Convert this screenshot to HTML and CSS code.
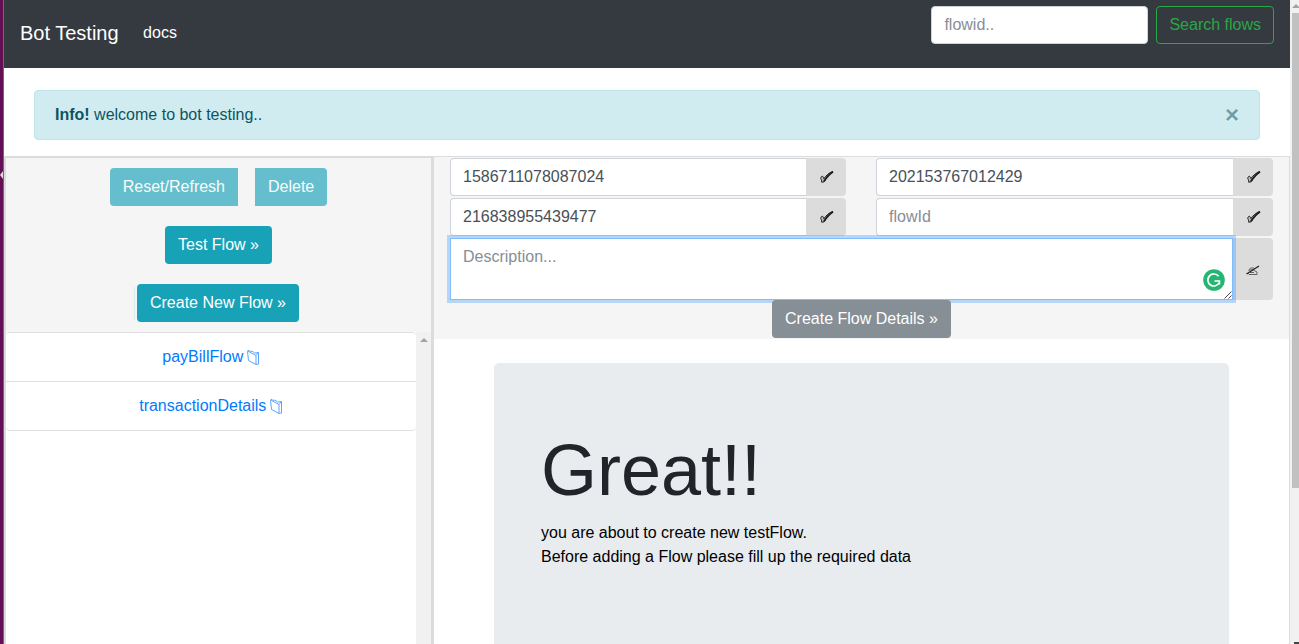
FILE: index.html
```html
<!DOCTYPE html>
<html lang="en">
<head>
<meta charset="utf-8">
<title>Bot Testing</title>
<link rel="stylesheet" href="styles.css">
</head>
<body>
<svg class="defs" aria-hidden="true">
  <symbol id="check" viewBox="0 0 16 14"><path d="M2.600 6.500C3.800 5.800 4.600 6.800 4.800 8.700 7 5.500 10 2.700 14 1.300 10.500 4 7.500 7.500 5 11.900L2.700 12.200C2.600 10.300 2.400 9 1.600 8.300Z" fill="#b9bcc0" stroke="#222" stroke-width="1"/><path d="M5 11.300C7.400 7.500 10.600 3.800 14 1.700" fill="none" stroke="#1c1c1c" stroke-width="1.900"/></symbol>
  <symbol id="folder" viewBox="0 0 14 17"><path d="M1.500 2.500 2.500 11.500 10 15.500V6.500L2.500 2.500ZM2 2.500V1.200L4.500 2.500 6 2 8.500 4 12.500 3.500V15L10 15.500M10 6.500 12.500 3.500" fill="none" stroke="#5aa5ff" stroke-width="1"/></symbol>
</svg>
<div class="window">
  <div class="dock"><i class="dock-arrow"></i></div>
  <main class="app">
    <nav class="navbar">
      <a class="brand">Bot Testing</a>
      <a class="nav-link">docs</a>
      <form class="search">
        <input class="control search-input" placeholder="flowid..">
        <button type="button" class="btn btn-outline">Search flows</button>
      </form>
    </nav>
    <div class="alert"><span><strong>Info!</strong> welcome to bot testing..</span><span class="close">×</span></div>
    <div class="panels">
      <aside class="sidebar">
        <div class="actions">
          <div class="action-row">
            <button class="btn btn-info muted start">Reset/Refresh</button>
            <button class="btn btn-info muted end">Delete</button>
          </div>
          <button class="btn btn-info">Test Flow »</button>
          <div class="create"><i class="sliver"></i><button class="btn btn-info">Create New Flow »</button></div>
        </div>
        <div class="flows">
          <ul class="list">
            <li>payBillFlow <svg class="folder"><use href="#folder"/></svg></li>
            <li>transactionDetails <svg class="folder"><use href="#folder"/></svg></li>
          </ul>
          <div class="list-scroll"><i class="up"></i></div>
        </div>
      </aside>
      <section class="content">
        <div class="details">
          <div class="fields">
            <div class="group"><input class="control" value="1586711078087024"><span class="addon"><svg class="check"><use href="#check"/></svg></span></div>
            <div class="group"><input class="control" value="202153767012429"><span class="addon"><svg class="check"><use href="#check"/></svg></span></div>
            <div class="group"><input class="control" value="216838955439477"><span class="addon"><svg class="check"><use href="#check"/></svg></span></div>
            <div class="group"><input class="control" placeholder="flowId"><span class="addon"><svg class="check"><use href="#check"/></svg></span></div>
          </div>
          <div class="group description">
            <textarea class="control area" placeholder="Description..."></textarea>
            <svg class="assistant" viewBox="0 0 22 22"><circle cx="11" cy="11" r="10.800" fill="#27b573"/><path d="M15.600 7.300A6 6 0 1 0 16.300 13.500" fill="none" stroke="#fff" stroke-width="1.700"/><path d="M11.500 12H16.500V15.500" fill="none" stroke="#fff" stroke-width="1.500"/></svg>
            <svg class="grip" viewBox="0 0 8 8"><path d="M.5 7.500 7.500.5M4.500 7.500 7.500 4.500" stroke="#444" stroke-width="1"/></svg>
            <span class="addon"><svg class="writing" viewBox="0 0 14 11"><path d="M2.500 5.500 4.500 3H8M3 6C5 4 7 4.500 9 6L11 7V9.500H3L1.500 8M4 7.500H8" fill="none" stroke="#555" stroke-width=".9"/><path d="M.5 9 13 1" stroke="#222" stroke-width="1.300"/></svg></span>
          </div>
          <button class="btn btn-secondary">Create Flow Details »</button>
        </div>
        <div class="jumbotron">
          <h1>Great!!</h1>
          <p>you are about to create new testFlow.<br>Before adding a Flow please fill up the required data</p>
        </div>
      </section>
    </div>
  </main>
  <div class="page-scroll"><i class="up"></i><div class="thumb"></div><i class="corner"></i></div>
</div>
</body>
</html>
```
FILE: styles.css
```css
*{box-sizing:border-box}
body{margin:0;overflow:hidden;background:#fff;color:#212529;font:16px/24px "Liberation Sans",Arial,sans-serif}
input,textarea,button{font:inherit;margin:0}
.defs{position:absolute;width:0;height:0}
.window{display:flex;height:644px}
.dock{width:4px;background:#630f55;border-right:1px solid #8b5881;padding-top:171px;flex:none}
.dock-arrow{display:block;width:3px;height:8px;border:solid transparent;border-width:4px 3px 4px 0;border-right-color:#ddd}
.app{width:1286px;flex:none;display:flex;flex-direction:column}
.navbar{height:68px;background:#343a40;display:flex;padding:0 16px;color:#fff;flex:none}
.brand{font-size:20px;line-height:30px;padding-top:18px}
.nav-link{margin-left:24.5px;padding-top:21px}
.search{display:flex;gap:8px;margin-left:auto;padding-top:6px}
.control{display:block;height:38px;padding:6px 12px;border:1px solid #ced4da;border-radius:4px;background:#fff;color:#495057;outline:0;min-width:0}
.control::placeholder{color:#868e96;opacity:1}
.search-input{width:217px}
.btn{display:block;height:38px;padding:6px 12px;border:1px solid transparent;border-radius:4px;white-space:nowrap}
.btn-outline{background:none;border-color:#28a745;color:#28a745}
.btn-info{background:#17a2b8;color:#fff}
.muted{opacity:.65}
.start{border-radius:4px 0 0 4px}
.end{border-radius:0 4px 4px 0}
.alert{margin:22px 30px 16px;height:50px;flex:none;padding:0 20px;border:1px solid #bee5eb;border-radius:4px;background:#d1ecf1;color:#0c5460;display:flex;justify-content:space-between;align-items:center}
.close{font-size:24px;font-weight:700;opacity:.5;text-shadow:0 1px 0 #fff}
.panels{display:flex;flex:1;min-height:0}
.sidebar{width:429px;border:2px solid #dcdcdc;border-bottom:0;display:flex;flex-direction:column}
.actions{height:174px;padding-top:10px;background:#f5f5f5;display:flex;flex-direction:column;align-items:center;gap:20px;flex:none}
.action-row{display:flex;gap:17px}
.create{display:flex;align-items:center;gap:2px;margin-left:-4px}
.sliver{width:1px;height:33px;background:#d9e9ed}
.flows{display:flex;flex:1}
.list{flex:1;margin:0;padding:0;list-style:none;text-align:center;color:#007bff}
.list li{height:49px;padding-top:12px;border-top:1px solid #dfdfdf}
.list li:first-child{border-radius:4px 4px 0 0}
.list li:last-child{height:50px;border-bottom:1px solid #dfdfdf;border-radius:0 0 4px 4px}
.folder{width:14px;height:17px;vertical-align:-4px;margin-left:-2px}
.list-scroll{width:15px;background:#f1f1f1;padding:6px 4px}
.up{display:block;width:8px;height:4px;border:solid transparent;border-width:0 4px 4px;border-bottom-color:#a3a3a3}
.content{flex:1;border:1px solid #dcdcdc;border-bottom:0;overflow:hidden}
.details{height:182px;background:#f5f5f5;padding:1px 16px 0}
.fields{display:grid;grid-template-columns:396px 397px;column-gap:30px;row-gap:2px}
.group{display:flex}
.group .control{flex:1;border-right:0;border-radius:4px 0 0 4px}
.addon{width:40px;background:#dcdcdc;border-radius:0 4px 4px 0;display:flex;align-items:center;justify-content:center}
.check{width:16px;height:14px;margin-left:1px}
.description{position:relative;width:823px;margin-top:2px}
.group .area{height:62px;resize:none;border:1px solid #80bdff;border-radius:0;box-shadow:0 0 0 3px rgba(0,123,255,.25);z-index:1}
.assistant{position:absolute;z-index:2;right:48px;top:31px;width:22px;height:22px}
.grip{position:absolute;z-index:2;right:41px;bottom:1px;width:8px;height:8px}
.writing{width:14px;height:11px;margin-top:2px}
.description .addon{width:40px}
.btn-secondary{position:relative;z-index:2;margin:0 auto;background:#868e96;color:#fff}
.jumbotron{width:735px;height:400px;margin:24px 0 0 60px;padding:64px 47px;border-radius:5px;background:#e9ecef}
.jumbotron h1{margin:0 0 8px;font-size:72px;line-height:86px;font-weight:300}
.jumbotron p{margin:0;color:#000}
.page-scroll{width:9px;flex:none;background:#f1f1f1;overflow:hidden;display:flex;flex-direction:column;padding-left:2px;padding-top:4px}
.thumb{height:475px;margin-top:5px;background:#c1c1c1;flex:none}
.corner{width:5px;height:2px;margin:auto 0 0 2px;background:#444}
```
